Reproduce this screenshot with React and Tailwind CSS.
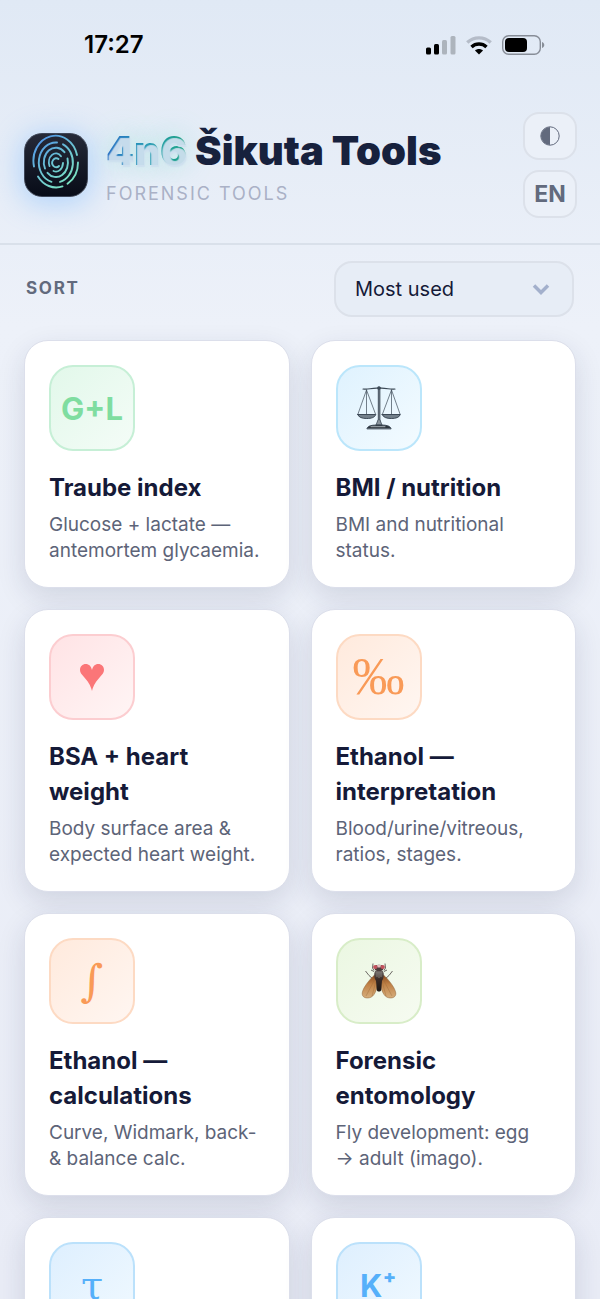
import { ChevronDown } from "lucide-react";

const tones = {
  green: "border-[#c6efd6] from-[#e2f8ea] to-[#f4fcf7] text-[#7fdda0]",
  blue: "border-[#bbe1fb] from-[#deeffe] to-[#f0f9ff] text-[#56b0fa]",
  sky: "border-[#bbe6fb] from-[#dff2fe] to-[#f3fbff] text-[#56b0fa]",
  red: "border-[#fccdd0] from-[#ffe3e5] to-[#fff5f5] text-[#fb7678]",
  orange: "border-[#fddac3] from-[#ffeadd] to-[#fff6f1] text-[#f99a57]",
  lime: "border-[#d8edc8] from-[#ebf7e2] to-[#f6fbf1] text-[#84cc16]",
};

function ScalesIcon() {
  return (
    <svg viewBox="0 0 44 46" className="h-[46px] w-11" fill="none" stroke="#3d4a57" strokeLinecap="round">
      <path d="M6 4c5 1 8-1.200 15-.8h2c7-.4 10 1.800 15 .8" strokeWidth="1.200" />
      <path d="M21.300 4v34h1.600V4z" fill="#7d8994" strokeWidth=".9" />
      <circle cx="22" cy="3" r="1.600" fill="#3d4a57" strokeWidth=".5" />
      <path d="M9.500 5 1 29M9.500 5v24M9.500 5l9 24M34.500 5l-9 24M34.500 5v24M34.500 5l8.500 24" strokeWidth=".7" />
      <path d="M.7 29.500h18.100c-1 3-4.500 4-9 4s-8.100-1-9.100-4zM25.200 29.500h18.100c-1 3-4.500 4-9 4s-8.100-1-9.100-4z" fill="#73808b" strokeWidth="1" />
      <path d="m21 35-2 5h6l-2-5" fill="#8b969f" strokeWidth=".8" />
      <path d="M10 43.500c1-3 5-3.500 12-3.500s11 .5 12 3.500z" fill="#2c353d" strokeWidth="1" />
      <path d="M14 41.700h14" stroke="#dce6ed" strokeWidth=".7" />
    </svg>
  );
}

function FlyIcon() {
  return (
    <svg viewBox="0 0 36 38" className="h-[38px] w-9" fill="none">
      <defs>
        <linearGradient id="wing" x1="0" y1="0" x2="0" y2="1">
          <stop offset="0" stopColor="#8a4a1e" />
          <stop offset=".4" stopColor="#c08146" />
          <stop offset="1" stopColor="#d6ae7c" />
        </linearGradient>
        <linearGradient id="body" x1="0" y1="0" x2="0" y2="1">
          <stop offset="0" stopColor="#6f6865" />
          <stop offset=".4" stopColor="#3a2b26" />
          <stop offset="1" stopColor="#1d1715" />
        </linearGradient>
      </defs>
      <path d="M13 8.500 11.500 6l.5-4.500M23 8.500 24.500 6 24 1.500M12 17l-4-3.500L4.500 9M24 17l4-3.500L31.500 9M13 9.500l-3-1.500M23 9.500 26 8" stroke="#5d5855" strokeWidth=".9" />
      <path d="M13.500 13C10 16 2 25 1.200 31c-.3 4 3 5.500 7 4.800 5-.8 8-7.500 9-17.800zM22.500 13C26 16 34 25 34.800 31c.3 4-3 5.500-7 4.800-5-.8-8-7.500-9-17.800z" fill="url(#wing)" stroke="#8e6137" strokeWidth=".5" />
      <path d="M14 17 5 34M15 19l-4 15M22 17l9 17M21 19l4 15" stroke="#99693a" strokeWidth=".4" />
      <path d="M14 9h8c1.500 3 1 7-1 10l-.8 9c-.5 2-3.900 2-4.400 0L15 19c-2-3-2.500-7-1-10z" fill="url(#body)" />
      <path d="M16 10v5M18 9.500V16M20 10v5" stroke="#a39d99" strokeWidth=".6" />
      <ellipse cx="18" cy="6" rx="4.500" ry="3.300" fill="#4b3c3b" />
      <ellipse cx="14.300" cy="5" rx="2.200" ry="2.100" fill="#c2515c" />
      <ellipse cx="21.700" cy="5" rx="2.200" ry="2.100" fill="#c2515c" />
      <path d="M16 3h4l-.6 2.500h-2.800z" fill="#e9bcc0" />
    </svg>
  );
}

function Logo() {
  return (
    <div className="h-16 w-16 shrink-0 rounded-[18px] border border-[#3d4658] bg-linear-to-b from-[#262a38] to-[#080c18] shadow-[0_4px_28px_4px_rgba(120,185,255,0.45)]">
      <svg viewBox="0 0 64 64" className="-m-px h-16 w-16" fill="none" stroke="url(#print)" strokeWidth="1.900" strokeLinecap="round">
        <defs>
          <linearGradient id="print" gradientUnits="userSpaceOnUse" x1="10" y1="8" x2="46" y2="54">
            <stop offset="0" stopColor="#4f93e8" />
            <stop offset=".5" stopColor="#6cc3d2" />
            <stop offset="1" stopColor="#7de6c0" />
          </linearGradient>
        </defs>
        <path d="M10 33.500A22 25 0 0 1 53 22" />
        <path d="M54 29.500A22 25 0 0 1 43.500 50.800" />
        <path d="M14 43.500A22 25 0 0 0 38.500 53.400" />
        <path d="M33 9.500A17 20 0 0 0 27.500 48.800" />
        <path d="M39 11.300A17 20 0 0 1 36 48.900" />
        <path d="M21 35.500A12 14.500 0 0 1 40.500 19.200" />
        <path d="M43.500 25.500A12 14.500 0 0 1 23.500 39.800" />
        <path d="M25.500 33A7 9 0 0 1 37 23.200" />
        <path d="M39 30A7 9 0 0 1 29.500 38" />
        <path d="M34.500 26A4 4.500 0 1 0 35 33" />
      </svg>
    </div>
  );
}

function StatusBar() {
  return (
    <div className="flex h-[88px] items-center justify-between pt-0.5 pr-[55px] pl-[84px] text-black">
      <span className="text-2xl font-semibold">17:27</span>
      <div className="flex items-center gap-[10px]">
        <svg viewBox="0 0 30 19" className="h-[19px] w-[30px]" fill="#000">
          <rect y="11.500" width="5" height="7" rx="1.500" />
          <rect x="8" y="8" width="5" height="10.500" rx="1.500" />
          <rect x="16" y="4" width="5" height="14.500" rx="1.500" opacity=".23" />
          <rect x="24.500" y="0" width="5" height="18.500" rx="1.500" opacity=".23" />
        </svg>
        <svg viewBox="0 0 26 19" className="h-[19px] w-[26px]" fill="none" strokeWidth="3.400">
          <path d="M1.300 6.500a17 17 0 0 1 23.400 0" stroke="#b5bcc8" />
          <path d="M5.500 11a11 11 0 0 1 15 0" stroke="#000" />
          <path d="M13 18.500 9 14.500c2.200-2 5.800-2 8 0z" fill="#000" />
        </svg>
        <svg viewBox="0 0 43 20" className="h-5 w-[43px]">
          <rect x=".7" y=".7" width="37.600" height="18.600" rx="6" fill="none" stroke="#878d97" strokeWidth="1.400" />
          <rect x="3" y="3" width="22" height="14" rx="4" />
          <path d="M40 7c3 1 3 5 0 6z" fill="#878d97" />
        </svg>
      </div>
    </div>
  );
}

const tools = [
  {
    title: "Traube index",
    text: "Glucose + lactate — antemortem glycaemia.",
    tone: "green",
    icon: <span className="text-[31px] font-bold">G+L</span>,
  },
  {
    title: "BMI / nutrition",
    text: "BMI and nutritional status.",
    tone: "sky",
    icon: <ScalesIcon />,
  },
  {
    title: "BSA + heart weight",
    text: "Body surface area & expected heart weight.",
    tone: "red",
    icon: (
      <svg viewBox="0 0 24 27" className="h-[27px] w-6" fill="currentColor">
        <path d="M12 27C10.500 21 8 17.500 4 13 1.500 10.200 0 8.500 0 6 0 2.500 2.500 0 5.800 0 9 0 11.200 2.200 12 6c.8-3.800 3-6 6.200-6C21.500 0 24 2.500 24 6c0 2.500-1.500 4.200-4 7-4 4.500-6.500 8-8 14z" />
      </svg>
    ),
  },
  {
    title: "Ethanol — interpretation",
    text: "Blood/urine/vitreous, ratios, stages.",
    tone: "orange",
    icon: <span className="font-['Liberation_Serif',serif] text-[52px]">‰</span>,
  },
  {
    title: "Ethanol — calculations",
    text: "Curve, Widmark, back- & balance calc.",
    tone: "orange",
    icon: <span className="font-['DejaVu_Serif',serif] text-[44px]">∫</span>,
  },
  {
    title: "Forensic entomology",
    text: "Fly development: egg → adult (imago).",
    tone: "lime",
    icon: <FlyIcon />,
  },
  {
    title: "Time of death",
    text: "Body cooling and post-mortem interval.",
    tone: "blue",
    icon: <span className="font-['DejaVu_Serif',serif] text-[40px]">τ</span>,
  },
  {
    title: "Vitreous potassium",
    text: "Post-mortem interval from K⁺.",
    tone: "blue",
    icon: <span className="text-[31px] font-bold">K⁺</span>,
  },
];

function ToolCard({ title, text, tone, icon }) {
  return (
    <a
      href="#"
      className="block rounded-3xl border border-[#dcdfeb] bg-white px-6 pt-6 pb-[23px] shadow-[0_10px_28px_rgba(30,41,75,0.13)]"
    >
      <div
        className={`flex h-[86px] w-[86px] items-center justify-center rounded-3xl border-2 bg-linear-to-br leading-none ${tones[tone]}`}
      >
        {icon}
      </div>
      <h2 className="mt-[19px] text-2xl leading-[35px] font-bold text-[#151a38]">{title}</h2>
      <p className="mt-[7px] text-[19px] leading-[26px] text-[#5d6478]">{text}</p>
    </a>
  );
}

export default function App() {
  return (
    <div className="h-screen overflow-hidden bg-linear-to-b from-[#e0e9f5] via-[#edf1f9] via-25% to-[#e9ecf6] font-[Inter,sans-serif]">
      <StatusBar />
      <header className="flex items-center justify-between border-b-2 border-[#d9e0ea] pt-6 pr-[23px] pb-[25px] pl-6">
        <div className="flex items-center gap-[18px]">
          <Logo />
          <div>
            <h1 className="pt-1 text-[40px] leading-[50px] font-black text-[#17213d]">
              <span className="bg-linear-to-r from-[#2563c4] via-[#2392b5] to-[#0d9873] bg-clip-text text-transparent [text-shadow:1px_2px_1px_rgba(206,223,238,0.95),0_0_28px_rgba(94,220,200,0.4)]">
                4n6
              </span>{" "}
              Šikuta Tools
            </h1>
            <p className="mt-1 text-lg leading-7 tracking-[2px] text-[#aab1c6]">FORENSIC TOOLS</p>
          </div>
        </div>
        <div className="flex flex-col gap-[10px]">
          <button
            type="button"
            aria-label="Theme"
            className="flex h-12 w-[54px] items-center justify-center rounded-2xl border-2 border-[#dce1ea] bg-[#ebf0f8] text-[#626a7d]"
          >
            <svg viewBox="0 0 20 20" className="h-5 w-5">
              <circle cx="10" cy="10" r="9.200" fill="none" stroke="currentColor" />
              <path d="M10 1a9 9 0 0 0 0 18z" fill="currentColor" />
            </svg>
          </button>
          <button
            type="button"
            className="h-12 w-[54px] rounded-2xl border-2 border-[#dce1ea] bg-[#ebf0f8] text-[23px] font-bold text-[#626a7d]"
          >
            EN
          </button>
        </div>
      </header>

      <div className="flex items-center justify-between px-[26px] pt-4">
        <label htmlFor="sort" className="text-[17px] font-bold tracking-widest text-[#626a7d]">
          SORT
        </label>
        <div className="relative w-60">
          <select
            id="sort"
            className="h-14 w-full appearance-none rounded-[18px] border-2 border-[#dce1ea] bg-[#e7edf6] pl-[19px] text-xl text-[#151a38]"
          >
            <option>Most used</option>
          </select>
          <ChevronDown
            className="pointer-events-none absolute top-[14px] right-[19px] h-7 w-7 text-[#a3b0cc]"
            strokeWidth={3}
            strokeLinecap="butt"
            strokeLinejoin="miter"
          />
        </div>
      </div>

      <main className="grid grid-cols-2 gap-[21px] px-6 pt-[23px]">
        {tools.map((tool) => (
          <ToolCard key={tool.title} {...tool} />
        ))}
      </main>
    </div>
  );
}
